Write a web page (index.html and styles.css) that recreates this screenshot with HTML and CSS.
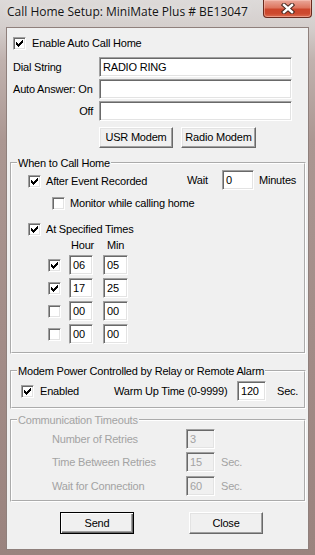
FILE: index.html
```html
<!DOCTYPE html>
<html>
<head>
<meta charset="utf-8">
<title>Call Home Setup</title>
<link rel="stylesheet" href="styles.css">
</head>
<body>
<div class="window">
  <div class="titlebar">
    <span class="title">Call Home Setup: MiniMate Plus # BE13047</span>
    <div class="close-btn">
      <svg width="14" height="11" viewBox="0 0 14 11"><path d="M3 2 L11 9 M11 2 L3 9" stroke="#4a2a22" stroke-width="4.4" stroke-linecap="square" fill="none"/><path d="M3 2 L11 9 M11 2 L3 9" stroke="#ffffff" stroke-width="2.4" stroke-linecap="square" fill="none"/></svg>
    </div>
  </div>
  <div class="client">
    <div class="cb-row enable">
      <span class="cb"><svg class="check" width="7" height="7" viewBox="0 0 7 7"><path d="M6 0h1v1h-1zM5 1h2v1h-2zM0 2h1v1h-1zM4 2h3v1h-3zM0 3h2v1h-2zM3 3h3v1h-3zM0 4h5v1h-5zM1 5h3v1h-3zM2 6h1v1h-1z"/></svg></span>
      <span>Enable Auto Call Home</span>
    </div>

    <div class="form-grid">
      <span class="lbl">Dial String</span><div class="edit">RADIO RING</div>
      <span class="lbl">Auto Answer: On</span><div class="edit"></div>
      <span class="lbl right">Off</span><div class="edit"></div>
    </div>

    <div class="modem-btns">
      <div class="btn usr">USR Modem</div>
      <div class="btn radio">Radio Modem</div>
    </div>

    <fieldset class="group g-when">
      <legend>When to Call Home</legend>
      <div class="fs-row r-after">
        <div class="cb-row w-after">
          <span class="cb"><svg class="check" width="7" height="7" viewBox="0 0 7 7"><path d="M6 0h1v1h-1zM5 1h2v1h-2zM0 2h1v1h-1zM4 2h3v1h-3zM0 3h2v1h-2zM3 3h3v1h-3zM0 4h5v1h-5zM1 5h3v1h-3zM2 6h1v1h-1z"/></svg></span>
          <span>After Event Recorded</span>
        </div>
        <span class="wait-lbl">Wait</span>
        <div class="edit e-wait">0</div>
        <span class="unit-min">Minutes</span>
      </div>
      <div class="cb-row r-monitor">
        <span class="cb"></span>
        <span>Monitor while calling home</span>
      </div>
      <div class="cb-row r-times">
        <span class="cb"><svg class="check" width="7" height="7" viewBox="0 0 7 7"><path d="M6 0h1v1h-1zM5 1h2v1h-2zM0 2h1v1h-1zM4 2h3v1h-3zM0 3h2v1h-2zM3 3h3v1h-3zM0 4h5v1h-5zM1 5h3v1h-3zM2 6h1v1h-1z"/></svg></span>
        <span>At Specified Times</span>
      </div>
      <div class="thead">
        <span class="th-hour">Hour</span>
        <span class="th-min">Min</span>
      </div>
      <div class="trows">
        <div class="trow">
          <span class="cb"><svg class="check" width="7" height="7" viewBox="0 0 7 7"><path d="M6 0h1v1h-1zM5 1h2v1h-2zM0 2h1v1h-1zM4 2h3v1h-3zM0 3h2v1h-2zM3 3h3v1h-3zM0 4h5v1h-5zM1 5h3v1h-3zM2 6h1v1h-1z"/></svg></span>
          <div class="edit e-hour">06</div>
          <div class="edit e-min">05</div>
        </div>
        <div class="trow">
          <span class="cb"><svg class="check" width="7" height="7" viewBox="0 0 7 7"><path d="M6 0h1v1h-1zM5 1h2v1h-2zM0 2h1v1h-1zM4 2h3v1h-3zM0 3h2v1h-2zM3 3h3v1h-3zM0 4h5v1h-5zM1 5h3v1h-3zM2 6h1v1h-1z"/></svg></span>
          <div class="edit e-hour">17</div>
          <div class="edit e-min">25</div>
        </div>
        <div class="trow">
          <span class="cb"></span>
          <div class="edit e-hour">00</div>
          <div class="edit e-min">00</div>
        </div>
        <div class="trow">
          <span class="cb"></span>
          <div class="edit e-hour">00</div>
          <div class="edit e-min">00</div>
        </div>
      </div>
    </fieldset>

    <fieldset class="group g-power">
      <legend>Modem Power Controlled by Relay or Remote Alarm</legend>
      <div class="fs-row r-power">
        <div class="cb-row w-enabled">
          <span class="cb"><svg class="check" width="7" height="7" viewBox="0 0 7 7"><path d="M6 0h1v1h-1zM5 1h2v1h-2zM0 2h1v1h-1zM4 2h3v1h-3zM0 3h2v1h-2zM3 3h3v1h-3zM0 4h5v1h-5zM1 5h3v1h-3zM2 6h1v1h-1z"/></svg></span>
          <span>Enabled</span>
        </div>
        <span class="warm-lbl">Warm Up Time (0-9999)</span>
        <div class="edit e-small">120</div>
        <span class="unit-sec">Sec.</span>
      </div>
    </fieldset>

    <fieldset class="group g-comm disabled">
      <legend>Communication Timeouts</legend>
      <div class="fs-row c-row c1">
        <span class="c-lbl">Number of Retries</span>
        <div class="edit e-small dis">3</div>
      </div>
      <div class="fs-row c-row c2">
        <span class="c-lbl">Time Between Retries</span>
        <div class="edit e-small dis">15</div>
        <span class="c-sec">Sec.</span>
      </div>
      <div class="fs-row c-row c3">
        <span class="c-lbl">Wait for Connection</span>
        <div class="edit e-small dis">60</div>
        <span class="c-sec">Sec.</span>
      </div>
    </fieldset>

    <div class="bottom-btns">
      <div class="btn default send">Send</div>
      <div class="btn close">Close</div>
    </div>
  </div>
</div>
</body>
</html>
```
FILE: styles.css
```css
* { box-sizing: border-box; }
html, body { margin: 0; padding: 0; }
body {
  width: 315px;
  height: 555px;
  overflow: hidden;
  font-family: "Liberation Sans", Arial, sans-serif;
  font-size: 11px;
  line-height: 13px;
  letter-spacing: -0.2px;
  color: #000;
}

.window {
  width: 315px;
  height: 555px;
  display: flex;
  flex-direction: column;
  background: linear-gradient(to bottom, #dddad9 0px, #d4cecc 28px, #c0b2ae 60px, #ab9792 140px, #a38d88 320px, #9a837e 555px);
}

.titlebar {
  height: 28px;
  flex: none;
  display: flex;
  justify-content: space-between;
  align-items: flex-start;
}
.title {
  font-family: "Open Sans", "Noto Sans", sans-serif;
  font-size: 12px;
  line-height: 16px;
  letter-spacing: 0;
  margin: 4px 0 0 7px;
  color: #141414;
  text-shadow: 0 0 6px rgba(255,255,255,0.9);
  white-space: nowrap;
}
.close-btn {
  width: 49px;
  height: 18px;
  margin-right: 3px;
  border: 1px solid #6a2a1e;
  border-top: none;
  border-radius: 0 0 4px 4px;
  background: linear-gradient(to bottom, #eaa89a 0%, #de7660 45%, #cc462c 55%, #cd4a2f 80%, #dc6e52 100%);
  box-shadow: inset 0 0 0 1px rgba(255,210,200,0.45);
  display: flex;
  align-items: center;
  justify-content: center;
}

.client {
  margin: 0 7px;
  width: 301px;
  height: 521px;
  flex: none;
  background: #f0f0f0;
  box-shadow: 0 0 0 1px #8f807c;
  display: flex;
  flex-direction: column;
  align-items: flex-start;
}

/* checkbox */
.cb {
  width: 13px;
  height: 13px;
  flex: none;
  background: #fff;
  border: 1px solid;
  border-color: #a0a0a0 #fff #fff #a0a0a0;
  box-shadow: inset 1px 1px 0 #696969, inset -1px -1px 0 #e3e3e3;
  display: flex;
  align-items: center;
  justify-content: center;
}
.check { display: block; fill: #000; }

.cb-row {
  display: flex;
  align-items: center;
  gap: 5px;
  height: 13px;
  white-space: nowrap;
}

/* edit box */
.edit {
  height: 20px;
  flex: none;
  background: #fff;
  color: #000;
  border: 1px solid;
  border-color: #a0a0a0 #fff #fff #a0a0a0;
  box-shadow: inset 1px 1px 0 #696969, inset -1px -1px 0 #e3e3e3;
  padding: 0 3px;
  line-height: 18px;
  white-space: nowrap;
  overflow: hidden;
}
.edit.dis { background: #f0f0f0; color: #a3a3a3; }

/* push button */
.btn {
  height: 21px;
  flex: none;
  background: #f0f0f0;
  border: 1px solid;
  border-color: #fff #696969 #696969 #fff;
  box-shadow: inset -1px -1px 0 #a0a0a0, inset 1px 1px 0 #e3e3e3;
  display: flex;
  align-items: center;
  justify-content: center;
  white-space: nowrap;
}
.btn.default {
  border: 1px solid #000;
  box-shadow: inset 1px 1px 0 #fff, inset -1px -1px 0 #696969, inset -2px -2px 0 #a0a0a0;
}

/* top part */
.enable { margin: 9px 0 0 6px; gap: 6px; }

.form-grid {
  margin: 7px 0 0 6px;
  display: grid;
  grid-template-columns: 86px 193px;
  grid-auto-rows: 20px;
  row-gap: 2px;
  align-items: center;
}
.lbl { white-space: nowrap; }
.lbl.right { justify-self: end; padding-right: 6px; }

.modem-btns {
  margin: 6px 0 0 92px;
  display: flex;
  gap: 8px;
}
.usr { width: 74px; }
.radio { width: 75px; }

/* group boxes */
.group {
  margin: 0 0 0 3px;
  width: 296px;
  min-width: 0;
  border: 2px groove #ffffff;
  padding: 0;
  display: flex;
  flex-direction: column;
  align-items: flex-start;
}
.group legend {
  margin-left: 5px;
  padding: 0 1px;
  line-height: 14px;
  white-space: nowrap;
}
.group.disabled legend,
.group.disabled .c-lbl,
.group.disabled .c-sec { color: #a3a3a3; }

.fs-row {
  display: flex;
  align-items: center;
  height: 20px;
  white-space: nowrap;
}

/* When to Call Home */
.g-when { margin-top: 8px; padding-bottom: 8px; }
.r-after { margin-left: 16px; align-items: flex-start; }
.w-after { width: 159px; margin-top: 5px; }
.wait-lbl { width: 35px; line-height: 20px; }
.e-wait { width: 32px; }
.unit-min { margin-left: 5px; line-height: 20px; }
.r-monitor { margin: 7px 0 0 40px; }
.r-times { margin: 13px 0 0 16px; }
.thead { margin: 3px 0 0 59px; display: flex; height: 13px; }
.th-hour { width: 36px; }
.trows {
  margin: 3px 0 0 36px;
  display: flex;
  flex-direction: column;
  gap: 3px;
}
.trow { display: flex; align-items: center; height: 20px; }
.e-hour { width: 24px; margin-left: 8px; }
.e-min { width: 25px; margin-left: 10px; }

/* Modem power */
.g-power { margin-top: 10px; padding-bottom: 6px; }
.r-power { margin: 3px 0 0 9px; }
.w-enabled { width: 93px; gap: 6px; }
.warm-lbl { width: 123px; }
.e-small { width: 29px; }
.unit-sec { margin-left: 11px; }

/* Communication timeouts */
.g-comm { margin-top: 4px; padding-bottom: 4px; }
.c-row { margin-left: 40px; }
.c1 { margin-top: 2px; }
.c2 { margin-top: 3px; }
.c3 { margin-top: 4px; }
.c-lbl { width: 134px; }
.c-sec { margin-left: 6px; }

/* bottom buttons */
.bottom-btns {
  margin: 10px 0 0 53px;
  display: flex;
  gap: 55px;
}
.send, .close { width: 74px; height: 22px; }
```
